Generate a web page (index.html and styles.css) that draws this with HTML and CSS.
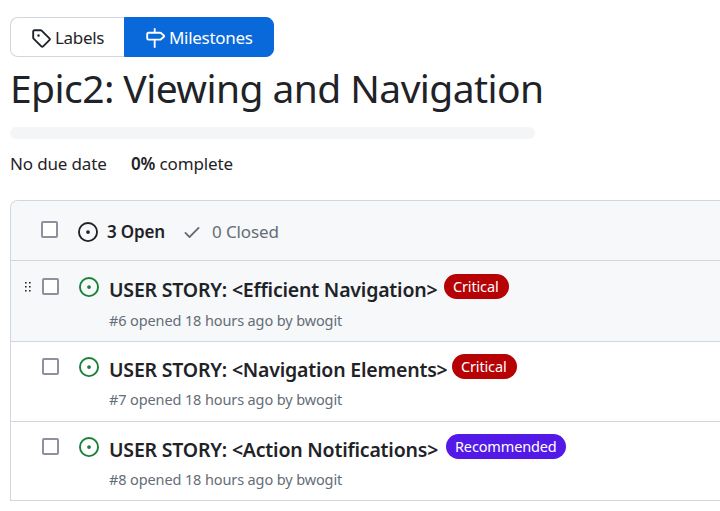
FILE: index.html
```html
<!DOCTYPE html>
<html lang="en">
<head>
<meta charset="utf-8">
<title>Epic2: Viewing and Navigation</title>
<link rel="stylesheet" href="styles.css">
</head>
<body>
<svg class="defs" aria-hidden="true">
  <symbol id="opened" viewBox="0 0 16 16"><path d="M8 9.5a1.5 1.5 0 1 0 0-3 1.5 1.5 0 0 0 0 3Z"/><path d="M8 0a8 8 0 1 1 0 16A8 8 0 0 1 8 0ZM1.5 8a6.5 6.5 0 1 0 13 0 6.5 6.5 0 0 0-13 0Z"/></symbol>
</svg>
<nav class="subnav">
  <a class="tab tab-labels"><svg class="icon" viewBox="0 0 16 16"><path d="M1 7.775V2.75C1 1.784 1.784 1 2.75 1h5.025c.464 0 .91.184 1.238.513l6.25 6.25a1.75 1.75 0 0 1 0 2.474l-5.026 5.026a1.75 1.75 0 0 1-2.474 0l-6.25-6.25A1.752 1.752 0 0 1 1 7.775Zm1.5 0c0 .066.026.13.073.177l6.25 6.25a.25.25 0 0 0 .354 0l5.025-5.025a.25.25 0 0 0 0-.354l-6.25-6.25a.25.25 0 0 0-.177-.073H2.75a.25.25 0 0 0-.25.25ZM6 5a1 1 0 1 1 0 2 1 1 0 0 1 0-2Z"/></svg><span>Labels</span></a>
  <a class="tab tab-milestones"><svg class="icon" viewBox="0 0 16 16"><path d="M7.75 0a.75.75 0 0 1 .75.75V3h3.634c.414 0 .814.147 1.13.414l2.07 1.75a1.75 1.75 0 0 1 0 2.672l-2.07 1.75a1.75 1.75 0 0 1-1.13.414H8.5v5.25a.75.75 0 0 1-1.5 0V10H2.75A1.75 1.75 0 0 1 1 8.25v-3.5C1 3.784 1.784 3 2.75 3H7V.75A.75.75 0 0 1 7.75 0Zm4.384 8.5a.25.25 0 0 0 .161-.06l2.07-1.75a.248.248 0 0 0 0-.38l-2.07-1.75a.25.25 0 0 0-.161-.06H2.75a.25.25 0 0 0-.25.25v3.5c0 .138.112.25.25.25h9.384Z"/></svg><span>Milestones</span></a>
</nav>
<h1 class="heading">Epic2: Viewing and Navigation</h1>
<div class="progress"></div>
<div class="stats"><span class="due">No due date</span><span class="complete"><b>0%</b> complete</span></div>
<main class="box">
  <header class="box-header">
    <span class="check"></span>
    <svg class="icon state"><use href="#opened"/></svg>
    <span class="open">3 Open</span>
    <svg class="icon tick" viewBox="0 0 16 16"><path d="M13.78 4.22a.75.75 0 0 1 0 1.06l-7.25 7.25a.75.75 0 0 1-1.06 0L2.22 9.28a.751.751 0 0 1 .018-1.042.751.751 0 0 1 1.042-.018L6 10.94l6.72-6.72a.75.75 0 0 1 1.06 0Z"/></svg>
    <span class="closed">0 Closed</span>
  </header>
  <article class="row active">
    <svg class="grip" viewBox="0 0 8 12"><path d="M1 1h1.6v1.6H1zM5 1h1.6v1.6H5zM1 5h1.6v1.6H1zM5 5h1.6v1.6H5zM1 9h1.6v1.6H1zM5 9h1.6v1.6H5z"/></svg>
    <span class="check"></span>
    <svg class="icon state green"><use href="#opened"/></svg>
    <div class="issue">
      <div class="line"><span class="title t1">USER STORY: &lt;Efficient Navigation&gt;</span><span class="badge critical">Critical</span></div>
      <div class="meta">#6 opened 18 hours ago by bwogit</div>
    </div>
  </article>
  <article class="row">
    <span class="check"></span>
    <svg class="icon state green"><use href="#opened"/></svg>
    <div class="issue">
      <div class="line"><span class="title t2">USER STORY: &lt;Navigation Elements&gt;</span><span class="badge critical">Critical</span></div>
      <div class="meta">#7 opened 18 hours ago by bwogit</div>
    </div>
  </article>
  <article class="row">
    <span class="check"></span>
    <svg class="icon state green"><use href="#opened"/></svg>
    <div class="issue">
      <div class="line"><span class="title t3">USER STORY: &lt;Action Notifications&gt;</span><span class="badge recommended">Recommended</span></div>
      <div class="meta">#8 opened 18 hours ago by bwogit</div>
    </div>
  </article>
</main>
</body>
</html>
```
FILE: styles.css
```css
* { box-sizing: border-box; }
body {
  margin: 0;
  padding: 17px 0 0 10px;
  height: 511px;
  overflow: hidden;
  background: #fff;
  color: #1f2328;
  font-family: "Noto Sans", "Open Sans", sans-serif;
  font-size: 17px;
}
.defs { position: absolute; width: 0; height: 0; }
.icon { width: 20px; height: 20px; fill: currentColor; flex: none; }
.subnav { display: flex; height: 40px; }
.tab { display: flex; align-items: center; border: 1px solid #d0d7de; white-space: nowrap; letter-spacing: -0.3px; }
.tab .icon { margin-top: 2px; }
.tab span { line-height: 24px; margin-top: 1px; }
.tab-labels { width: 114px; padding-left: 20px; gap: 4px; border-right: 0; border-radius: 8px 0 0 8px; }
.tab-milestones { width: 150px; padding-left: 20px; gap: 4px; border-color: #0969da; background: #0969da; color: #fff; border-radius: 0 8px 8px 0; }
.heading { margin: 1px 0 0; height: 60px; font-size: 39px; line-height: 60px; font-weight: 400; letter-spacing: -0.57px; white-space: nowrap; }
.progress { margin-top: 9px; width: 525px; height: 12px; border-radius: 6px; background: #f4f5f7; }
.stats { display: flex; height: 26px; margin-top: 12px; line-height: 26px; white-space: nowrap; letter-spacing: -0.15px; }
.due { width: 121px; }
.stats b { font-weight: 600; }
.box { margin-top: 23px; height: 301px; border: 1px solid #d0d7de; border-right: 0; border-radius: 8px 0 0 0; overflow: hidden; white-space: nowrap; }
.check { width: 17px; height: 17px; border: 2px solid #8f8f9d; border-radius: 2px; background: #fff; flex: none; }
.box-header { display: flex; align-items: center; height: 59px; padding: 1px 0 0 30px; background: #f6f8fa; }
.box-header .check { margin-top: -4px; }
.box-header .state { margin: 2px 9px 0 20px; }
.open { width: 75px; font-weight: 600; letter-spacing: -0.15px; }
.tick { color: #656d76; margin: 2px 10px 0 0; }
.closed { color: #656d76; letter-spacing: -0.1px; }
.row { position: relative; display: flex; height: 80px; padding: 16px 0 0 31px; border-top: 1px solid #d0d7de; }
.row.active { height: 81px; padding-top: 17px; background: #f6f8fa; }
.row .state { margin: -1px 10px 0 20px; }
.green { color: #1a7f37; }
.grip { position: absolute; left: 13px; top: 20px; width: 8px; height: 12px; fill: #1f2328; }
.line { display: flex; height: 27px; margin-top: -4px; }
.title { height: 30px; margin-top: 1px; line-height: 30px; font-size: 19.5px; font-weight: 600; letter-spacing: -0.2px; }
.t1 { width: 335px; }
.t2 { width: 343px; }
.t3 { width: 337px; }
.badge { height: 25px; padding-left: 9px; border-radius: 13px; color: #fff; font-size: 14.5px; line-height: 25px; letter-spacing: -0.15px; }
.critical { width: 65px; background: #b60205; }
.recommended { width: 120px; background: #5319e7; }
.meta { margin-top: 6px; height: 24px; color: #656d76; font-size: 14.5px; line-height: 24px; letter-spacing: -0.12px; }
.active .meta { margin-top: 7px; }
```
